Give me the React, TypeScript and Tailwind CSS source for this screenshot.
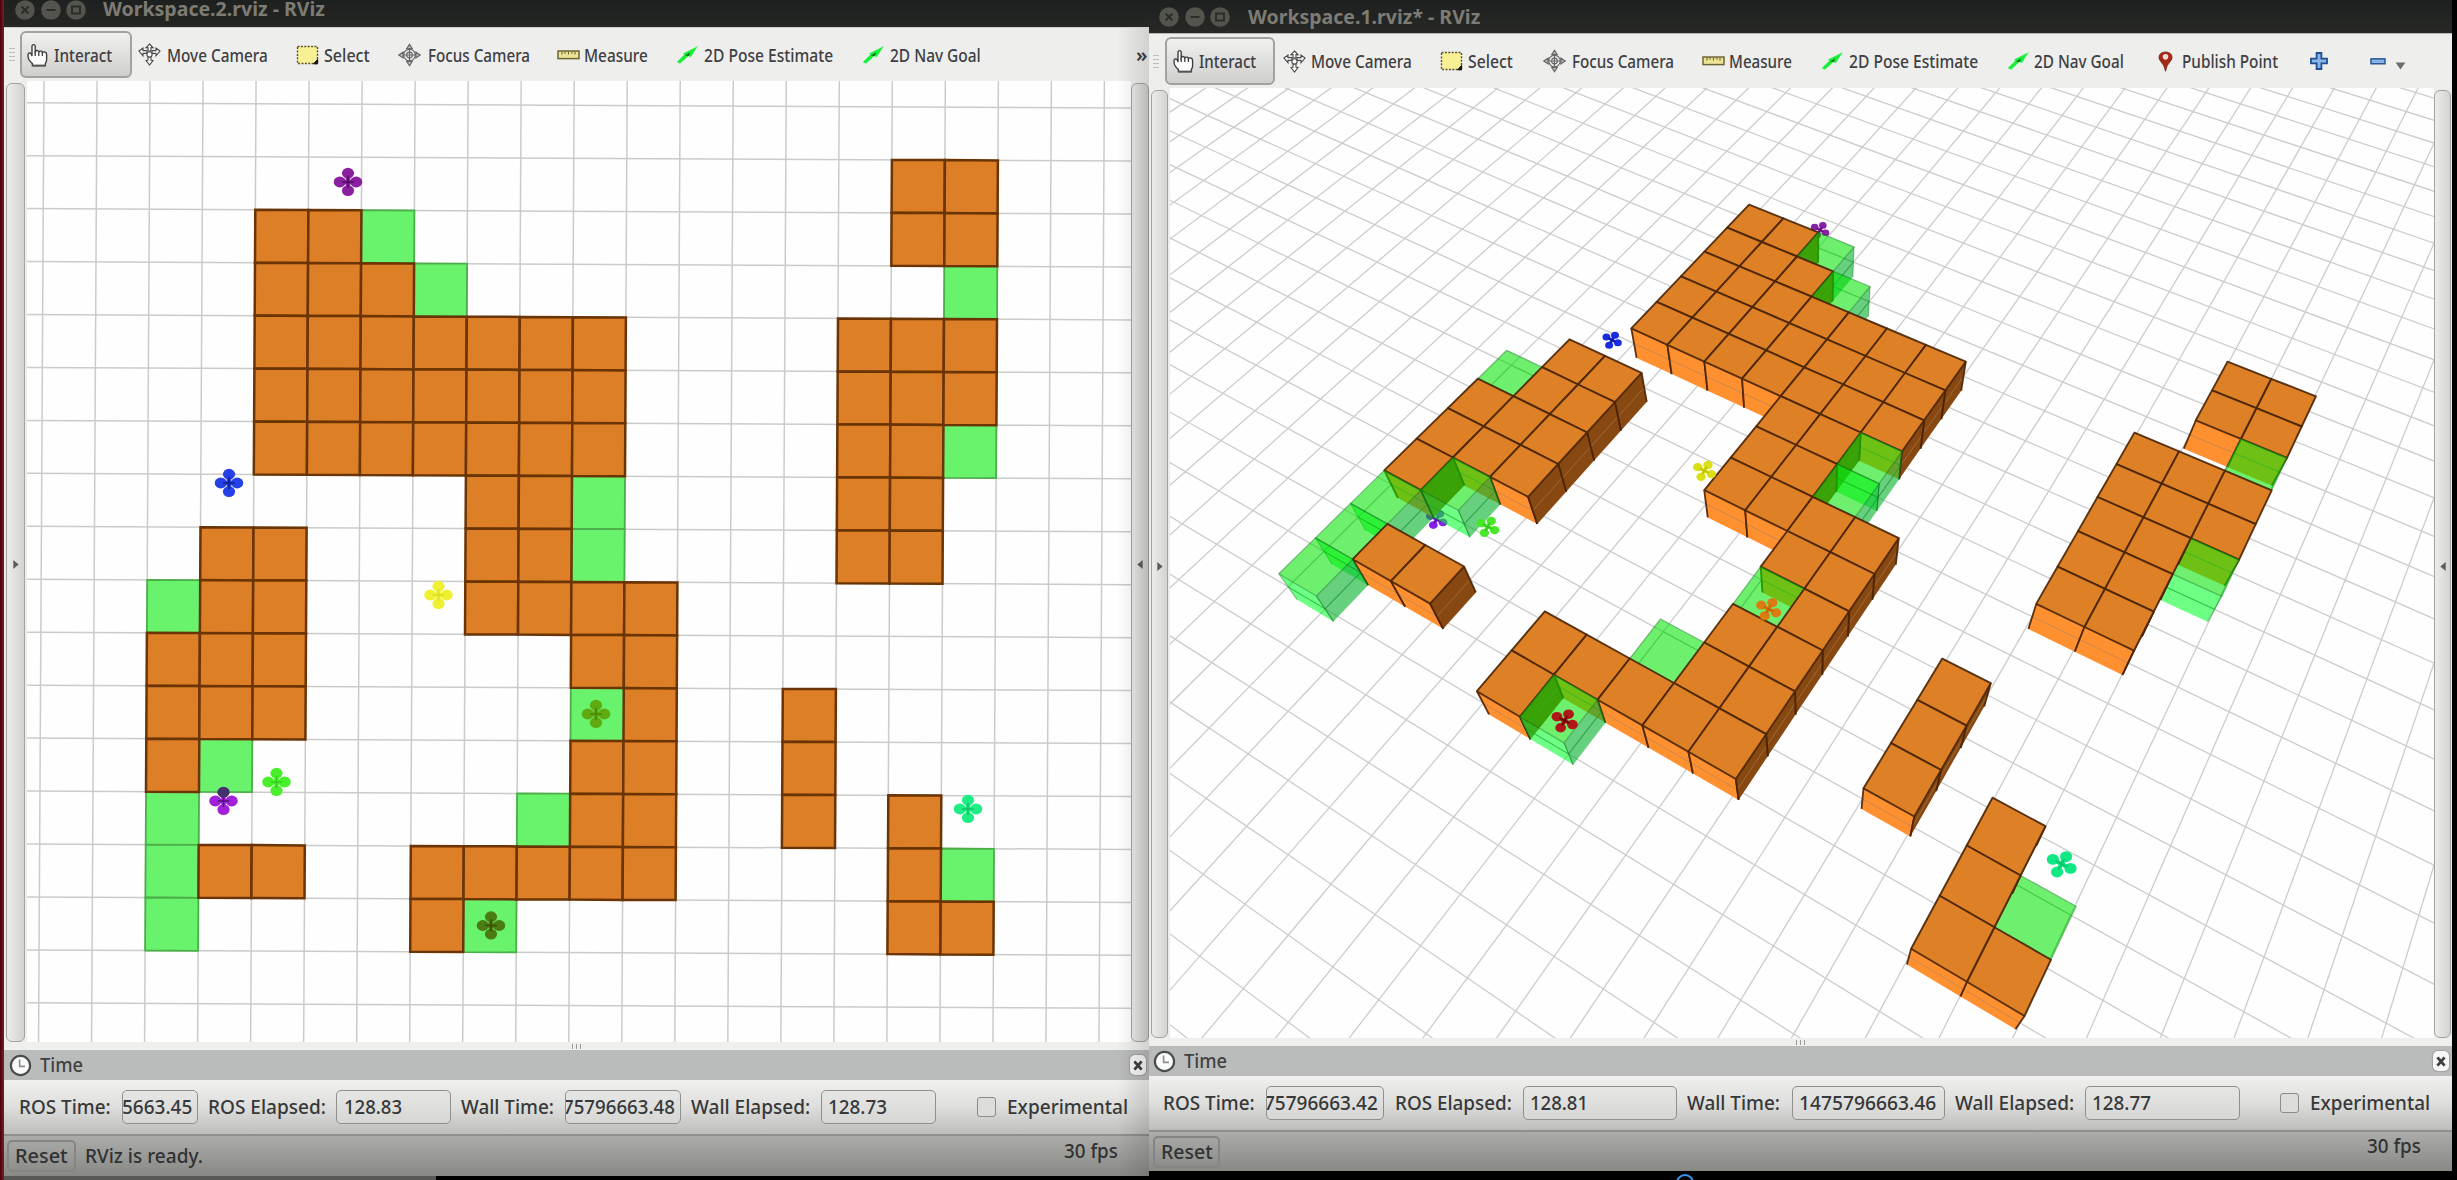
import { useLayoutEffect, useRef, type ReactNode } from "react";

/* ---------- text fitted to the width of its box ---------- */
function Fit({ className, children }: { className: string; children: string }) {
  const ref = useRef<HTMLSpanElement>(null);
  useLayoutEffect(() => {
    const el = ref.current;
    if (!el || !el.parentElement) return;
    el.style.transform = `scaleX(${el.parentElement.clientWidth / el.offsetWidth})`;
  }, []);
  return (
    <span className={"block shrink-0 whitespace-nowrap " + className}>
      <span ref={ref} className="inline-block origin-left">{children}</span>
    </span>
  );
}

/* ---------- map ---------- */
type Cell = [number, number];
const run = (row: number, from: number, to: number): Cell[] =>
  Array.from({ length: to - from + 1 }, (_, i) => [from + i, row] as Cell);

const WALLS: Cell[] = [
  ...run(-1, 14, 15), ...run(0, 14, 15),
  ...run(2, 13, 15), ...run(3, 13, 15), ...run(4, 13, 14), ...run(5, 13, 14), ...run(6, 13, 14),
  ...run(0, 2, 3), ...run(1, 2, 4), ...run(2, 2, 8), ...run(3, 2, 8), ...run(4, 2, 8),
  ...run(5, 6, 7), ...run(6, 6, 7), ...run(7, 6, 9), ...run(8, 8, 9), ...run(9, 9, 9),
  ...run(10, 8, 9), ...run(11, 8, 9), ...run(12, 5, 9), ...run(13, 5, 5),
  ...run(6, 1, 2), ...run(7, 1, 2), ...run(8, 0, 2), ...run(9, 0, 2), ...run(10, 0, 0), ...run(12, 1, 2),
  ...run(9, 12, 12), ...run(10, 12, 12), ...run(11, 12, 12),
  ...run(11, 14, 14), ...run(12, 14, 14), ...run(13, 14, 15),
];
const GOALS: Cell[] = [
  [4, 0], [5, 1], [15, 1], [15, 4], [8, 5], [8, 6], [8, 9], [7, 11], [6, 13],
  [0, 7], [1, 10], [0, 11], [0, 12], [0, 13], [15, 12],
];
const has = (list: Cell[], c: number, r: number) => list.some(([a, b]) => a === c && b === r);

/* ---------- top-down projection ---------- */
const flat = (c: number, r: number): [number, number] => [
  149.3 + 53.02 * c - 0.3 * r,
  209.2 + 0.26 * c + 52.95 * r,
];
const pts = (list: [number, number][]) =>
  list.map(([x, y]) => `${x.toFixed(1)},${y.toFixed(1)}`).join(" ");

/* ---------- perspective camera, calibrated from marker points ---------- */
const MARKS: [number, number, number, number, number][] = [
  [2, 0, 1, 1750.3, 204.3], [4, 0, 1, 1819.7, 232.7], [9, 2, 1, 1964.6, 361], [2, 5, 1, 1632.6, 327],
  [9, 5, 1, 1901.5, 449.3], [6, 8, 1, 1706.8, 490], [10, 7, 1, 1898.1, 538.3], [1, 6, 1, 1569.5, 339.3],
  [3, 6, 1, 1641.3, 372], [3, 10, 1, 1527.9, 494.7], [0, 14, 1, 1279.7, 573.3], [1, 14, 1, 1316, 593.3],
  [1, 12, 1, 1387.8, 524.3], [3, 12, 1, 1462.8, 566.7], [3, 13, 1, 1430.8, 601], [0, 7, 1, 1506.9, 350],
  [5, 12, 1, 1545, 612.3], [5, 14, 1, 1478.8, 691.3], [10, 13, 1, 1737.1, 777.7], [10, 12, 1, 1766.2, 733.7],
  [12, 9, 1, 1943.4, 659.3], [13, 9, 1, 1990, 683.3], [12, 12, 1, 1865.3, 788.7], [13, 12, 1, 1914.5, 813.5],
  [14, -1, 1, 2229.8, 362.1], [16, -1, 1, 2315.5, 396.6], [13, 2, 1, 2135.7, 433.3], [16, 2, 1, 2271.5, 487.5],
  [13, 7, 1, 2038.1, 604.6], [15, 7, 1, 2133.8, 649.1], [14, 11, 1, 1994.1, 798.8], [15, 11, 1, 2045, 826.3],
  [16, 12, 1, 2075.2, 906.7], [14, 14, 1, 1914.5, 948.9], [16, 14, 1, 2024, 1014.1],
  [2, 5, 0, 1637.4, 360], [3, 6, 0, 1646, 401.7], [3, 10, 0, 1537, 523], [0, 14, 0, 1300.2, 599.3],
  [1, 14, 0, 1332.7, 620.7], [3, 13, 0, 1443.2, 628], [6, 8, 0, 1709.2, 517.3], [10, 13, 0, 1737.9, 799.3],
  [10, 7, 0, 1896.3, 563.3], [12, 12, 0, 1863, 809.3], [13, 12, 0, 1910, 836], [13, 7, 0, 2029.7, 629.4],
  [15, 7, 0, 2122.3, 673.4], [14, 14, 0, 1908.4, 964.5], [16, 14, 0, 2015.9, 1028.4], [9, 2, 0, 1961.7, 386.7],
  [5, 14, 0, 1490, 715], [7, 14, 0, 1573, 764.3],
];

function calibrate(): number[] {
  const n = 11;
  const m = Array.from({ length: n }, () => new Array<number>(n + 1).fill(0));
  const add = (row: number[], rhs: number) => {
    for (let i = 0; i < n; i++) {
      for (let j = 0; j < n; j++) m[i][j] += row[i] * row[j];
      m[i][n] += row[i] * rhs;
    }
  };
  for (const [c, r, z, px, py] of MARKS) {
    const X = c / 10 - 0.8, Y = r / 10 - 0.7;
    const x = (px - 1800) / 400, y = (py - 600) / 400;
    add([X, Y, z, 1, 0, 0, 0, 0, -x * X, -x * Y, -x * z], x);
    add([0, 0, 0, 0, X, Y, z, 1, -y * X, -y * Y, -y * z], y);
  }
  for (let i = 0; i < n; i++) {
    let p = i;
    for (let k = i + 1; k < n; k++) if (Math.abs(m[k][i]) > Math.abs(m[p][i])) p = k;
    [m[i], m[p]] = [m[p], m[i]];
    for (let k = 0; k < n; k++) {
      if (k === i) continue;
      const f = m[k][i] / m[i][i];
      for (let j = i; j <= n; j++) m[k][j] -= f * m[i][j];
    }
  }
  return m.map((row, i) => row[n] / row[i]);
}
const P = calibrate();
const depth = (c: number, r: number, z: number) =>
  P[8] * (c / 10 - 0.8) + P[9] * (r / 10 - 0.7) + P[10] * z + 1;
const persp = (c: number, r: number, z: number): [number, number] => {
  const X = c / 10 - 0.8, Y = r / 10 - 0.7, w = depth(c, r, z);
  return [
    1799.5 + (400 * (P[0] * X + P[1] * Y + P[2] * z + P[3])) / w,
    600.5 + (400 * (P[4] * X + P[5] * Y + P[6] * z + P[7])) / w,
  ];
};
const area = (q: [number, number][]) =>
  q.reduce((s, [x, y], i) => {
    const [u, v] = q[(i + 1) % q.length];
    return s + x * v - u * y;
  }, 0);

/* ---------- drones ---------- */
function Drone({ x, y, s = 1, fill, core, petals }: {
  x: number; y: number; s?: number; fill: string; core: string; petals: [number, number][];
}) {
  return (
    <g transform={`translate(${x} ${y}) scale(${s})`}>
      {petals.map(([a, b], i) => (
        <g key={i}>
          <line x1="0" y1="0" x2={a} y2={b} stroke={fill} strokeWidth="4.4" />
          <ellipse cx={a} cy={b} rx="6.1" ry="5.4" fill={fill} />
        </g>
      ))}
      {petals.map(([a, b], i) => (
        <line key={i} x1="0" y1="0" x2={a * 0.7} y2={b * 0.7} stroke={core} strokeWidth="1.5" opacity="0.7" />
      ))}
    </g>
  );
}
const PLUS: [number, number][] = [[0, -8.8], [8.2, 0], [0, 8.6], [-8.2, 0]];
const CROSS: [number, number][] = [[-8.6, -4.6], [4.6, -7.4], [9, 4.4], [-4.4, 8]];

/* ---------- 2D scene ---------- */
function FlatScene() {
  return (
    <svg viewBox="27 81 1104 961" className="block h-full w-full bg-[#fefefe]">
      {Array.from({ length: 24 }, (_, i) => i - 3).map((k) => {
        const [a, b] = flat(k, -3), [c, d] = flat(k, 18);
        const [e, f] = flat(-4, k), [g, h] = flat(20, k);
        return (
          <g key={k} stroke="#cbcbcb" strokeWidth="1.5">
            <line x1={a} y1={b} x2={c} y2={d} />
            <line x1={e} y1={f} x2={g} y2={h} />
          </g>
        );
      })}
      {GOALS.map(([c, r]) => (
        <polygon key={`${c},${r}`} points={pts([flat(c, r), flat(c + 1, r), flat(c + 1, r + 1), flat(c, r + 1)])}
          fill="#69f26b" stroke="#4cae4b" strokeWidth="1.8" />
      ))}
      {WALLS.map(([c, r]) => (
        <polygon key={`${c},${r}`} points={pts([flat(c, r), flat(c + 1, r), flat(c + 1, r + 1), flat(c, r + 1)])}
          fill="#dd7f27" stroke="#6b3405" strokeWidth="2.5" />
      ))}
      <Drone x={348} y={182} fill="#8a1fa0" core="#3a0a48" petals={PLUS} />
      <Drone x={229} y={483} fill="#2540e6" core="#0a1460" petals={PLUS} />
      <Drone x={438.5} y={595} fill="#f0f032" core="#d8d81e" petals={PLUS} />
      <Drone x={596} y={714} fill="#5eaa10" core="#3f7a06" petals={PLUS} />
      <Drone x={276.5} y={782} fill="#48f02c" core="#28c414" petals={PLUS} />
      <Drone x={223.5} y={801} fill="#a021d8" core="#3a0a60" petals={PLUS} />
      <ellipse cx="223.5" cy="792.3" rx="6" ry="5.3" fill="#45306e" />
      <Drone x={491} y={925.5} fill="#4a7c12" core="#3a3c08" petals={PLUS} />
      <Drone x={968} y={809} fill="#1eec84" core="#0cb45c" petals={PLUS} />
    </svg>
  );
}

/* ---------- 3D scene ---------- */
function Cube({ c, r, goal }: { c: number; r: number; goal: boolean }) {
  const top = [persp(c, r, 1), persp(c + 1, r, 1), persp(c + 1, r + 1, 1), persp(c, r + 1, 1)];
  const front = [persp(c, r + 1, 1), persp(c + 1, r + 1, 1), persp(c + 1, r + 1, 0), persp(c, r + 1, 0)];
  const right = [persp(c + 1, r + 1, 1), persp(c + 1, r, 1), persp(c + 1, r, 0), persp(c + 1, r + 1, 0)];
  const same = goal ? GOALS : WALLS;
  const showFront = !has(WALLS, c, r + 1);
  const showRight = area(right) > 0 && !has(WALLS, c + 1, r) && !has(same, c + 1, r);
  const edge = goal ? "#0b6a1a" : "#4a2303";
  const eo = goal ? 0.4 : 0.9;
  const line = (a: [number, number], b: [number, number], w: number, col: string, o: number) => (
    <line x1={a[0]} y1={a[1]} x2={b[0]} y2={b[1]} stroke={col} strokeWidth={w} opacity={o} />
  );
  const side = goal ? 1.1 : 1.8;
  return (
    <g>
      {goal && (
        <polygon points={pts([persp(c, r, 0.5), persp(c + 1, r, 0.5), persp(c + 1, r + 1, 0.5), persp(c, r + 1, 0.5)])}
          fill="none" stroke="#1c5c22" strokeOpacity="0.3" strokeWidth="1" />
      )}
      {showFront && (
        <>
          <polygon points={pts(front)} fill={goal ? "#00ff28" : "#ff9030"} fillOpacity={goal ? 0.57 : 1} />
          {line(persp(c, r + 1, 0.5), persp(c + 1, r + 1, 0.5), 1, goal ? "#0b7a1a" : "#8a7f70", goal ? 0.25 : 0.45)}
          {line(front[0], front[3], side, edge, eo)}
          {line(front[1], front[2], side, edge, eo)}
        </>
      )}
      {showRight && (
        <>
          <polygon points={pts(right)} fill={goal ? "#00b028" : "#874911"} fillOpacity={goal ? 0.6 : 1} />
          {line(persp(c + 1, r + 1, 0.5), persp(c + 1, r, 0.5), 1, goal ? "#0b7a1a" : "#c9a47c", goal ? 0.25 : 0.35)}
          {line(right[0], right[3], side, edge, eo)}
          {line(right[1], right[2], side, edge, eo)}
        </>
      )}
      <polygon points={pts(top)} fill={goal ? "#00e400" : "#dd8026"} fillOpacity={goal ? 0.57 : 1}
        stroke={edge} strokeOpacity={eo} strokeWidth={goal ? 1.3 : 1.9} strokeLinejoin="round" />
    </g>
  );
}

function PerspectiveScene() {
  const lines: ReactNode[] = [];
  const range = Array.from({ length: 121 }, (_, i) => i - 50);
  for (const k of range) {
    for (const axis of [0, 1]) {
      const ok = range.filter((t) => (axis ? depth(t, k, 0.5) : depth(k, t, 0.5)) > 0.15);
      if (ok.length < 2) continue;
      const s = ok[0], e = ok[ok.length - 1];
      const [a, b] = axis ? persp(s, k, 0.5) : persp(k, s, 0.5);
      const [c, d] = axis ? persp(e, k, 0.5) : persp(k, e, 0.5);
      lines.push(<line key={`${axis}:${k}`} x1={a} y1={b} x2={c} y2={d} />);
    }
  }
  const order = (c: number) => (c <= 13 ? c : 30 - c);
  const cubes = [
    ...WALLS.map(([c, r]) => ({ c, r, goal: false })),
    ...GOALS.map(([c, r]) => ({ c, r, goal: true })),
  ].sort((a, b) => a.r - b.r || order(a.c) - order(b.c));
  return (
    <svg viewBox="1170 88 1264 950" className="block h-full w-full bg-[#fefefe]">
      <g stroke="#cccccc" strokeWidth="1.3">{lines}</g>
      <Drone x={1820} y={230} s={0.62} fill="#8a20a8" core="#3a0a48" petals={CROSS} />
      <Drone x={1436.5} y={519.3} s={0.72} fill="#8420e8" core="#2a0a60" petals={CROSS} />
      {cubes.map((q) => <Cube key={`${q.c},${q.r}`} {...q} />)}
      <Drone x={1612} y={340} s={0.65} fill="#1a2ce0" core="#0a1460" petals={CROSS} />
      <Drone x={1704.4} y={470.7} s={0.77} fill="#dce012" core="#a8ac08" petals={CROSS} />
      <Drone x={1487.7} y={526.7} s={0.77} fill="#48e828" core="#28b414" petals={CROSS} />
      <Drone x={1768.5} y={609} s={0.84} fill="#dc7c10" core="#a85c08" petals={CROSS} />
      <Drone x={1564.5} y={720.7} s={0.88} fill="#b01818" core="#300404" petals={CROSS} />
      <Drone x={2061.5} y={864} fill="#10e884" core="#08b45c" petals={CROSS} />
    </svg>
  );
}

/* ---------- icons ---------- */
function HandIcon() {
  return (
    <svg viewBox="0 0 23 24" className="h-[24px] w-[23px] shrink-0">
      <path d="M6 13 V3.6 Q6 1.6 7.6 1.6 Q9.2 1.6 9.2 3.6 V8.6 Q10 7.4 11.4 7.6 Q12.6 7.8 12.8 8.8 Q14 7.8 15.2 8.2 Q16.4 8.6 16.4 9.4 Q17.6 8.6 18.8 9 Q20.6 9.4 20.6 11.4 V17 Q20.6 19 19.4 20.2 V22.6 H6.4 V20.6 Q5 19.4 3.4 17.4 Q1.8 15 2 11.6 Q2.6 9.4 4.4 10.2 Q5.4 10.8 6 13 Z"
        fill="#fdfdfd" stroke="#3f3f3f" strokeWidth="1.4" />
      <path d="M9.2 8.6 V13 M12.8 8.8 V13 M16.4 9.4 V13" stroke="#3f3f3f" strokeWidth="1.3" />
      <path d="M6.4 22.6 H19.6" stroke="#555" strokeWidth="2" />
    </svg>
  );
}
function MoveIcon() {
  return (
    <svg viewBox="0 0 23 23" className="h-[23px] w-[23px] shrink-0">
      <g fill="#f8f8f8" stroke="#4a4a4a" strokeWidth="1.1">
        <path d="M11.5 1 L15 4.6 H13 V8 H10 V4.6 H8 Z" />
        <path d="M11.5 22 L8 17.6 L10 17 V14 H13 V17 L15 17.6 Z" />
        <path d="M1 8 L5 5 V7.6 H9 V10.4 H5 V12.8 Z" />
        <path d="M22 8 L18 5 V7.6 H14 V10.4 H18 V12.8 Z" />
        <circle cx="11.5" cy="11.4" r="2.6" />
      </g>
    </svg>
  );
}
function SelectIcon() {
  return (
    <svg viewBox="0 0 23 20" className="h-[20px] w-[23px] shrink-0">
      <rect x="1.5" y="1.5" width="20" height="17" fill="#f8f095" stroke="#55522e" strokeWidth="1.4" strokeDasharray="2 1.4" />
      <path d="M21.6 14.4 V18.8 H17.6 Z" fill="#111" stroke="#111" />
    </svg>
  );
}
function FocusIcon() {
  return (
    <svg viewBox="0 0 24 24" className="h-[24px] w-[23px] shrink-0">
      <g fill="none" stroke="#666" strokeWidth="1.2">
        <circle cx="12" cy="12" r="6" />
        <circle cx="12" cy="12" r="3" />
        <path d="M12 6 V18 M6 12 H18" />
        <path d="M12 0.8 L15 5.4 H9 Z M12 23.2 L15 18.6 H9 Z M0.8 12 L5.4 9 V15 Z M23.2 12 L18.6 9 V15 Z" fill="#b5b5b5" />
      </g>
    </svg>
  );
}
function MeasureIcon() {
  return (
    <svg viewBox="0 0 23 10" className="h-[10px] w-[23px] shrink-0">
      <rect x="1" y="1" width="21" height="7.6" fill="#ece394" stroke="#6d6534" strokeWidth="1.5" />
      <path d="M5 1.5 V4.6 M8 1.5 V3.8 M11.5 1.5 V4.6 M15 1.5 V3.8 M18 1.5 V4.6" stroke="#6d6534" strokeWidth="1.1" />
    </svg>
  );
}
function ArrowIcon() {
  return (
    <svg viewBox="0 0 22 18" className="h-[18px] w-[22px] shrink-0">
      <path d="M1 16 L8.4 8.8 L7.4 7.6 L21.4 0.6 L14.6 11 L12.6 9.8 L4 17.4 Z" fill="#16ee38" stroke="#4cf468" strokeWidth="0.5" />
      <path d="M9 9.6 L14 6.6 L12.6 10 Z" fill="#0b5d18" />
    </svg>
  );
}
function PinIcon() {
  return (
    <svg viewBox="0 0 16 22" className="h-[21px] w-[15px] shrink-0">
      <path d="M8 21.4 Q7 15 3 11 Q1 8.6 1 6.6 Q1.4 1 8 0.8 Q14.6 1 15 6.6 Q15 8.6 13 11 Q9 15 8 21.4 Z" fill="#a52a14" stroke="#6d1607" strokeWidth="0.8" />
      <circle cx="8" cy="6" r="3" fill="#f0dcd6" />
    </svg>
  );
}
function ClockIcon() {
  return (
    <svg viewBox="0 0 23 23" className="h-[23px] w-[23px] shrink-0">
      <circle cx="11.5" cy="11.5" r="9.6" fill="#fafafa" stroke="#4a4d4e" strokeWidth="2.2" />
      <path d="M10.6 5.6 V12.4 H16" fill="none" stroke="#8c8c8c" strokeWidth="1.6" />
    </svg>
  );
}
function CloseIcon() {
  return (
    <span className="flex h-[20px] w-[16px] shrink-0 items-center justify-center rounded-[5px] bg-[#f7f7f6] shadow-[0_0_1px_1px_#a0a0a0]">
      <svg viewBox="0 0 10 11" className="h-[11px] w-[10px]">
        <path d="M1.4 1.4 L8.6 9.6 M8.6 1.4 L1.4 9.6" stroke="#3e3e3e" strokeWidth="2.8" />
      </svg>
    </span>
  );
}

/* ---------- window furniture ---------- */
function WindowButtons() {
  const glyphs = ["M6.5 6.5 L13.5 13.5 M13.5 6.5 L6.5 13.5", "M5.5 10 H14.5", "M6 6.5 H14 V13.5 H6 Z"];
  return (
    <>
      {glyphs.map((d) => (
        <svg key={d} viewBox="0 0 20 20" className="mr-[5.5px] h-[20px] w-[20px] shrink-0">
          <circle cx="10" cy="10" r="9.8" fill="#53544e" />
          <path d={d} fill="none" stroke="#2b2c28" strokeWidth="1.9" />
        </svg>
      ))}
    </>
  );
}
function Gutter({ className, dir }: { className: string; dir: "left" | "right" }) {
  return (
    <div className={"flex shrink-0 bg-[#ededeb] " + className}>
      <div className="flex flex-1 items-center justify-center rounded-[6px] border border-[#a3a3a1] bg-linear-to-r from-[#ececeb] to-[#d3d3d1]">
        <svg viewBox="0 0 6 10" className="mt-[4px] h-[9px] w-[6px]">
          <path d={dir === "right" ? "M0 0 L6 5 L0 10 Z" : "M6 0 L0 5 L6 10 Z"} fill="#5d5d5d" />
        </svg>
      </div>
    </div>
  );
}
function Field({ className, children }: { className: string; children: ReactNode }) {
  return (
    <div className={"flex h-[34px] shrink-0 items-center overflow-hidden rounded-[5px] border-[1.5px] border-[#8f8f8d] bg-linear-to-b from-[#e6e6e5] to-[#d6d6d5] " + className}>
      {children}
    </div>
  );
}
function Tool({ className, icon, width, label }: { className: string; icon: ReactNode; width: string; label: string }) {
  return (
    <div className={"flex shrink-0 items-center " + className}>
      {icon}
      <Fit className={width}>{label}</Fit>
    </div>
  );
}
function Grip() {
  return (
    <div className="flex w-[6px] shrink-0 flex-col gap-[3px]">
      {[0, 1, 2, 3].map((i) => <span key={i} className="h-px bg-[#bcbcba]" />)}
    </div>
  );
}
function GripDots({ className }: { className: string }) {
  return (
    <div className={"flex h-[8px] shrink-0 items-center gap-[3px] bg-[#efefed] " + className}>
      {[0, 1, 2].map((i) => <span key={i} className="h-[5px] w-px bg-[#9a9a98]" />)}
    </div>
  );
}

const BUTTON = "rounded-[6px] border-2 border-[#a2a2a0] bg-linear-to-b from-[#f0f0ef] to-[#cfcfce]";
const CONTENT = "bg-linear-to-b from-[#f0f0ef] via-[#dededd] to-[#bdbdbb]";
const STATUS = "border-t-2 border-[#8f8f8d] bg-linear-to-b from-[#acacaa] to-[#888885]";

function LeftWindow() {
  return (
    <div className="relative flex h-[1176px] w-[1145px] shrink-0 flex-col overflow-hidden bg-[#eeeeec]">
      <div className="flex h-[27px] shrink-0 items-center bg-linear-to-b from-[#1c201f] to-[#262723] pb-[8px] pl-[11px]">
        <WindowButtons />
        <Fit className="ml-[11px] w-[222px] text-[19px] leading-[19px] font-bold text-[#7d7b74]">Workspace.2.rviz - RViz</Fit>
      </div>
      <div className="flex h-[54px] shrink-0 items-center border-t border-[#cfcfcd] text-[18.5px] leading-[24px] font-medium text-[#3e4044]">
        <div className="w-[5px] shrink-0" />
        <Grip />
        <div className={"ml-[5px] flex h-[47px] w-[112px] shrink-0 items-center pl-[4px] " + BUTTON}>
          <HandIcon />
          <Fit className="ml-[5px] w-[58px]">Interact</Fit>
        </div>
        <Tool className="ml-[6px]" icon={<MoveIcon />} width="ml-[6px] w-[101px]" label="Move Camera" />
        <Tool className="ml-[28px]" icon={<SelectIcon />} width="ml-[5px] w-[46px]" label="Select" />
        <Tool className="ml-[28px]" icon={<FocusIcon />} width="ml-[7px] w-[102px]" label="Focus Camera" />
        <Tool className="ml-[27px]" icon={<MeasureIcon />} width="ml-[4px] w-[64px]" label="Measure" />
        <Tool className="ml-[28px]" icon={<ArrowIcon />} width="ml-[6px] w-[129px]" label="2D Pose Estimate" />
        <Tool className="ml-[29px]" icon={<ArrowIcon />} width="ml-[6px] w-[91px]" label="2D Nav Goal" />
        <Fit className="ml-auto mr-[2px] w-[11px] text-[20px] font-semibold">»</Fit>
      </div>
      <div className="flex h-[961px] shrink-0">
        <Gutter className="w-[23px] pt-[2px] pl-[2px] pr-[2px]" dir="right" />
        <div className="w-[1104px] shrink-0"><FlatScene /></div>
        <Gutter className="w-[18px] pt-[2px]" dir="left" />
      </div>
      <GripDots className="justify-center" />
      <div className="flex h-[30px] shrink-0 items-center bg-[#babcbb] pl-[5px] pr-[3px] text-[20px] font-medium text-[#3f4143]">
        <ClockIcon />
        <Fit className="ml-[8px] w-[43px] leading-[26px]">Time</Fit>
        <div className="flex-1" />
        <CloseIcon />
      </div>
      <div className={"flex h-[54px] shrink-0 items-center pb-[1px] text-[19.5px] leading-[26px] font-medium text-[#363839] " + CONTENT}>
        <Fit className="ml-[15px] w-[92px]">ROS Time:</Fit>
        <Field className="ml-[11px] w-[76px] justify-end pr-[5px]"><Fit className="w-[70px]">5663.45</Fit></Field>
        <Fit className="ml-[10px] w-[118px]">ROS Elapsed:</Fit>
        <Field className="ml-[10px] w-[115px] pl-[7px]"><Fit className="w-[58px]">128.83</Fit></Field>
        <Fit className="ml-[10px] w-[93px]">Wall Time:</Fit>
        <Field className="ml-[11px] w-[116px] justify-end pr-[5px]"><Fit className="w-[112px]">75796663.48</Fit></Field>
        <Fit className="ml-[10px] w-[119px]">Wall Elapsed:</Fit>
        <Field className="ml-[11px] w-[115px] pl-[6px]"><Fit className="w-[59px]">128.73</Fit></Field>
        <span className="ml-[41px] h-[20px] w-[19px] shrink-0 rounded-[3px] border-[1.5px] border-[#8b8b89] bg-[#dcdcdb]" />
        <Fit className="ml-[11px] w-[121px]">Experimental</Fit>
      </div>
      <div className={"flex flex-1 items-center text-[19.5px] leading-[26px] font-medium text-[#303233] " + STATUS}>
        <div className="ml-[3px] flex h-[32px] w-[69px] shrink-0 items-center rounded-[5px] border-2 border-[#858583] pl-[6px]">
          <Fit className="w-[53px]">Reset</Fit>
        </div>
        <Fit className="ml-[9px] w-[118px]">RViz is ready.</Fit>
        <div className="flex-1" />
        <Fit className="mr-[31px] mb-[11px] w-[54px]">30 fps</Fit>
      </div>
      <div className="pointer-events-none absolute top-[28px] right-0 h-[1148px] w-[32px] bg-linear-to-r from-transparent to-black/12" />
    </div>
  );
}

function RightWindow() {
  return (
    <div className="flex h-[1171px] w-[1303px] shrink-0 flex-col overflow-hidden bg-[#eeeeec]">
      <div className="flex h-[33px] shrink-0 items-center bg-linear-to-b from-[#1c201f] to-[#282925] pl-[10px]">
        <WindowButtons />
        <Fit className="ml-[12px] w-[232px] text-[19px] leading-[22px] font-bold text-[#7d7b74]">Workspace.1.rviz* - RViz</Fit>
      </div>
      <div className="flex h-[55px] shrink-0 items-center border-t border-[#b5b5b3] text-[18.5px] leading-[24px] font-medium text-[#3e4044]">
        <div className="w-[4px] shrink-0" />
        <Grip />
        <div className={"ml-[6px] flex h-[48px] w-[110px] shrink-0 items-center pl-[5px] " + BUTTON}>
          <HandIcon />
          <Fit className="ml-[4px] w-[57px]">Interact</Fit>
        </div>
        <Tool className="ml-[8px]" icon={<MoveIcon />} width="ml-[5px] w-[101px]" label="Move Camera" />
        <Tool className="ml-[28px]" icon={<SelectIcon />} width="ml-[5px] w-[45px]" label="Select" />
        <Tool className="ml-[30px]" icon={<FocusIcon />} width="ml-[6px] w-[102px]" label="Focus Camera" />
        <Tool className="ml-[28px]" icon={<MeasureIcon />} width="ml-[4px] w-[63px]" label="Measure" />
        <Tool className="ml-[29px]" icon={<ArrowIcon />} width="ml-[6px] w-[129px]" label="2D Pose Estimate" />
        <Tool className="ml-[29px]" icon={<ArrowIcon />} width="ml-[5px] w-[90px]" label="2D Nav Goal" />
        <Tool className="ml-[34px]" icon={<PinIcon />} width="ml-[9px] w-[96px]" label="Publish Point" />
        <svg viewBox="0 0 18 18" className="ml-[32px] h-[18px] w-[18px] shrink-0">
          <path d="M6.6 1 H11.4 V6.6 H17 V11.4 H11.4 V17 H6.6 V11.4 H1 V6.6 H6.6 Z" fill="#88b4e6" stroke="#1f4f94" strokeWidth="1.8" />
        </svg>
        <svg viewBox="0 0 18 8" className="ml-[41px] h-[7px] w-[18px] shrink-0">
          <rect x="1" y="1" width="16" height="5.6" fill="#88b4e6" stroke="#1f4f94" strokeWidth="1.6" />
        </svg>
        <svg viewBox="0 0 12 9" className="mt-[9px] ml-[8px] h-[8px] w-[11px] shrink-0">
          <path d="M0.5 0.5 H11.5 L6 8.5 Z" fill="#6c6c6c" />
        </svg>
      </div>
      <div className="flex h-[950px] shrink-0">
        <Gutter className="w-[21px] pt-[2px] pl-[2px] pr-[2px]" dir="right" />
        <div className="w-[1264px] shrink-0"><PerspectiveScene /></div>
        <Gutter className="w-[18px] pt-[2px] pr-[1px]" dir="left" />
      </div>
      <GripDots className="justify-center" />
      <div className="flex h-[30px] shrink-0 items-center bg-[#babcbb] pl-[4px] pr-[3px] text-[20px] font-medium text-[#3f4143]">
        <ClockIcon />
        <Fit className="ml-[8px] w-[43px] leading-[26px]">Time</Fit>
        <div className="flex-1" />
        <CloseIcon />
      </div>
      <div className={"flex h-[54px] shrink-0 items-center pb-[1px] text-[19.5px] leading-[26px] font-medium text-[#363839] " + CONTENT}>
        <Fit className="ml-[14px] w-[92px]">ROS Time:</Fit>
        <Field className="ml-[11px] w-[118px] justify-end pr-[5px]"><Fit className="w-[114px]">75796663.42</Fit></Field>
        <Fit className="ml-[11px] w-[117px]">ROS Elapsed:</Fit>
        <Field className="ml-[11px] w-[154px] pl-[6px]"><Fit className="w-[58px]">128.81</Fit></Field>
        <Fit className="ml-[10px] w-[93px]">Wall Time:</Fit>
        <Field className="ml-[12px] w-[153px] pl-[6px]"><Fit className="w-[137px]">1475796663.46</Fit></Field>
        <Fit className="ml-[10px] w-[119px]">Wall Elapsed:</Fit>
        <Field className="ml-[11px] w-[155px] pl-[6px]"><Fit className="w-[59px]">128.77</Fit></Field>
        <span className="ml-[40px] h-[20px] w-[19px] shrink-0 rounded-[3px] border-[1.5px] border-[#8b8b89] bg-[#dcdcdb]" />
        <Fit className="ml-[11px] w-[120px]">Experimental</Fit>
      </div>
      <div className={"flex flex-1 items-center text-[19.5px] leading-[26px] font-medium text-[#303233] " + STATUS}>
        <div className="ml-[4px] flex h-[32px] w-[67px] shrink-0 items-center rounded-[5px] border-2 border-[#858583] pl-[6px]">
          <Fit className="w-[52px]">Reset</Fit>
        </div>
        <div className="flex-1" />
        <Fit className="mr-[31px] mb-[11px] w-[54px]">30 fps</Fit>
      </div>
    </div>
  );
}

export default function App() {
  return (
    <div className="relative flex h-[1180px] w-[2457px] items-start overflow-hidden bg-black font-['Noto_Sans',sans-serif]">
      <div className="h-full w-[4px] shrink-0 bg-linear-to-r from-[#4a0008] to-[#7a2028]" />
      <div className="flex shrink-0 flex-col">
        <LeftWindow />
        <div className="h-[4px] w-[432px] bg-[#585856]" />
      </div>
      <RightWindow />
      <div className="absolute top-[1174px] left-[1676px] h-[18px] w-[18px] rounded-full border-2 border-[#3b93ee]" />
    </div>
  );
}
